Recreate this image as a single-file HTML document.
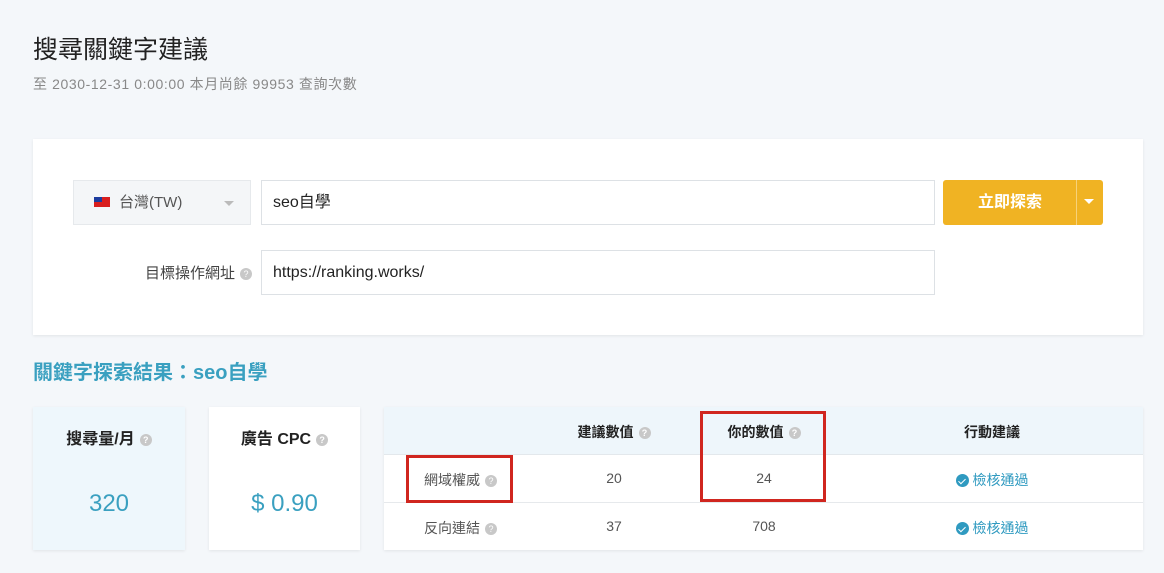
<!DOCTYPE html>
<html><head><meta charset="utf-8"><style>
*{box-sizing:border-box;margin:0;padding:0}
body{width:1164px;height:573px;background:#f4f7fa;font-family:"Liberation Sans","Noto Sans CJK TC",sans-serif;position:relative;overflow:hidden;color:#333}
.a{position:absolute}
.q{display:inline-block;width:12px;height:12px;border-radius:50%;background:#c8c8c8;color:#fff;font-size:9px;line-height:12px;text-align:center;vertical-align:middle;margin-left:5px}
.inp{background:#fff;border:1px solid #dde1e5;font-size:16px;color:#222;padding-left:11px;line-height:44px}
.shadow{box-shadow:0 1px 3px rgba(0,0,0,.08)}
.c{text-align:center}
.chk{display:inline-block;width:13px;height:13px;border-radius:50%;background:#2f9ac0;vertical-align:-2px;margin-right:4px;position:relative}
.chk:after{content:"";position:absolute;left:4px;top:2.5px;width:3px;height:6px;border:solid #fff;border-width:0 1.5px 1.5px 0;transform:rotate(45deg)}
</style></head><body>
<div class="a" style="left:33px;top:30px;font-size:25px;color:#222">搜尋關鍵字建議</div>
<div class="a" style="left:33px;top:74px;font-size:14px;letter-spacing:0.6px;color:#888">至 2030-12-31 0:00:00 本月尚餘 99953 查詢次數</div>
<div class="a shadow" style="left:33px;top:139px;width:1110px;height:196px;background:#fff"></div>
<div class="a" style="left:73px;top:180px;width:178px;height:45px;background:#f4f6f8;border:1px solid #e6e9ec;font-size:15px;color:#555;line-height:43px">
<span class="a" style="left:20px;top:16px;width:16px;height:10px;background:#d81e1e"><span class="a" style="left:0;top:0;width:8px;height:5px;background:#1c3c9e"></span></span>
<span class="a" style="left:45px;top:0">台灣(TW)</span>
<span class="a" style="left:150px;top:20px;border:5px solid transparent;border-top:5px solid #bbb"></span></div>
<div class="a inp" style="left:261px;top:180px;width:674px;height:45px">seo自學</div>
<div class="a" style="left:943px;top:180px;width:160px;height:45px;background:#f0b323;border-radius:3px;color:#fff;font-size:16px;font-weight:bold;line-height:45px">
<span class="a" style="left:35px">立即探索</span>
<span class="a" style="left:133px;top:0;width:1px;height:45px;background:#f7d27a"></span>
<span class="a" style="left:141px;top:19px;border:5px solid transparent;border-top:5px solid #fff"></span></div>
<div class="a" style="left:100px;top:262px;width:152px;text-align:right;font-size:15px;color:#444">目標操作網址<span class="q">?</span></div>
<div class="a inp" style="left:261px;top:250px;width:674px;height:45px">https://ranking.works/</div>
<div class="a" style="left:33px;top:356px;font-size:20px;font-weight:bold;color:#3aa0c0">關鍵字探索結果：seo自學</div>
<div class="a shadow" style="left:33px;top:407px;width:152px;height:143px;background:#eef7fc">
<div class="a c" style="left:0;width:152px;top:18px;font-size:16px;font-weight:bold;color:#222">搜尋量/月<span class="q">?</span></div>
<div class="a c" style="left:0;width:152px;top:83px;font-size:24px;color:#3aa0c0">320</div></div>
<div class="a shadow" style="left:209px;top:407px;width:151px;height:143px;background:#fff">
<div class="a c" style="left:0;width:151px;top:18px;font-size:16px;font-weight:bold;color:#222">廣告 CPC<span class="q">?</span></div>
<div class="a c" style="left:0;width:151px;top:83px;font-size:24px;color:#3aa0c0">$ 0.90</div></div>
<div class="a shadow" style="left:384px;top:407px;width:759px;height:143px;background:#fff">
<div class="a" style="left:0;top:0;width:759px;height:48px;background:#eef6fb;border-bottom:1px solid #e3e8ec"></div>
<div class="a" style="left:0;top:95px;width:759px;height:1px;background:#e6e9ec"></div>
<div class="a c" style="left:150px;width:160px;top:15px;font-size:14px;font-weight:bold;color:#222">建議數值<span class="q">?</span></div>
<div class="a c" style="left:300px;width:160px;top:15px;font-size:14px;font-weight:bold;color:#222">你的數值<span class="q">?</span></div>
<div class="a c" style="left:528px;width:160px;top:15px;font-size:14px;font-weight:bold;color:#222">行動建議</div>
<div class="a" style="left:40px;top:63px;font-size:14px;color:#555">網域權威<span class="q">?</span></div>
<div class="a" style="left:40px;top:111px;font-size:14px;color:#555">反向連結<span class="q">?</span></div>
<div class="a c" style="left:150px;width:160px;top:63px;font-size:14px;color:#555">20</div>
<div class="a c" style="left:150px;width:160px;top:111px;font-size:14px;color:#555">37</div>
<div class="a c" style="left:300px;width:160px;top:63px;font-size:14px;color:#555">24</div>
<div class="a c" style="left:300px;width:160px;top:111px;font-size:14px;color:#555">708</div>
<div class="a c" style="left:528px;width:160px;top:63px;font-size:14px;color:#2f9ac0"><span class="chk"></span>檢核通過</div>
<div class="a c" style="left:528px;width:160px;top:111px;font-size:14px;color:#2f9ac0"><span class="chk"></span>檢核通過</div>
</div>
<div class="a" style="left:406px;top:455px;width:107px;height:48px;border:3px solid #d0261f"></div>
<div class="a" style="left:700px;top:411px;width:126px;height:91px;border:3px solid #d0261f"></div>
</body></html>
